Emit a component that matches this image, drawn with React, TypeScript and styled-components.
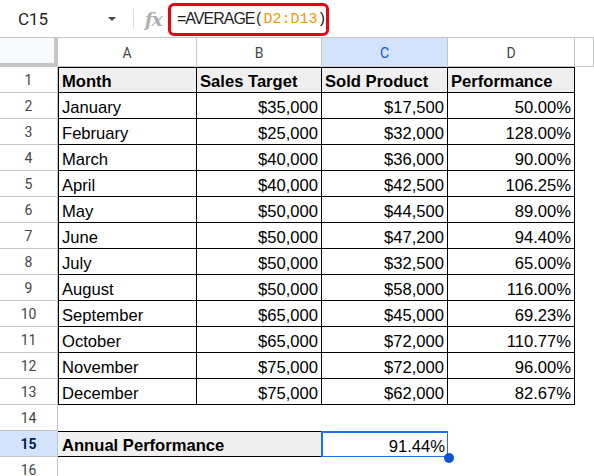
import React from "react";
import styled, { createGlobalStyle, css } from "styled-components";

const Global = createGlobalStyle`
  html, body { margin: 0; padding: 0; background: #fff; overflow: hidden; }
  * { box-sizing: border-box; }
`;

const GRID = "58px 139px 125px 126px 127px 1fr";
const HEAD_LINE = "#c4c7c5";

const Page = styled.div`
  width: 594px;
  height: 476px;
  background: #fff;
  overflow: hidden;
  font-family: "Liberation Sans", Arial, sans-serif;
`;

const Toolbar = styled.div`
  height: 37px;
  display: flex;
  align-items: center;
`;

const NameBox = styled.div`
  width: 133px;
  height: 37px;
  display: flex;
  align-items: center;
  padding-left: 18px;
  padding-right: 17px;
  justify-content: space-between;
  font-family: Roboto, "Liberation Sans", sans-serif;
  font-size: 17px;
  color: #1f1f1f;
`;

const Caret = styled.span`
  width: 0;
  height: 0;
  border-left: 4.5px solid transparent;
  border-right: 4.5px solid transparent;
  border-top: 4.5px solid #444746;
  margin-top: 1px;
`;

const Divider = styled.div`
  width: 1px;
  height: 20px;
  background: #dadce0;
`;

const Fx = styled.span`
  width: 34px;
  text-align: center;
  font-family: "DejaVu Serif", "Liberation Serif", serif;
  font-style: italic;
  font-weight: 700;
  font-size: 19px;
  color: #b0b0b0;
  letter-spacing: -1.5px;
  padding-left: 4px;
`;

const FormulaBox = styled.div`
  width: 161px;
  height: 33px;
  margin-top: 1px;
  border: 3px solid #e30613;
  border-radius: 6px;
  display: flex;
  align-items: center;
  padding-left: 6px;
  color: #1f1f1f;
  white-space: nowrap;
`;

const Fn = styled.span`
  font-family: "Liberation Sans", Arial, sans-serif;
  font-size: 16px;
  letter-spacing: -1px;
`;

const Mono = styled.span<{ $range?: boolean }>`
  font-family: "Liberation Mono", monospace;
  font-size: 15px;
  color: ${(p) => (p.$range ? "#f29900" : "#1f1f1f")};
`;

const HeaderRow = styled.div`
  display: grid;
  grid-template-columns: ${GRID};
  height: 30px;
`;

const Corner = styled.div`
  background: #f8f9fa;
  border-right: 4px solid #c4c7c5;
  border-bottom: 4px solid #c4c7c5;
  border-top: 1px solid ${HEAD_LINE};
`;

const ColHead = styled.div<{ $selected?: boolean }>`
  display: flex;
  align-items: center;
  justify-content: center;
  font-family: Roboto, "Liberation Sans", sans-serif;
  font-size: 14px;
  border-top: 1px solid ${HEAD_LINE};
  border-right: 1px solid ${HEAD_LINE};
  border-bottom: 1px solid ${HEAD_LINE};
  padding-top: 1px;
  color: ${(p) => (p.$selected ? "#0b57d0" : "#444746")};
  background: ${(p) => (p.$selected ? "#d3e3fd" : "#fff")};
`;

const Row = styled.div`
  display: grid;
  grid-template-columns: ${GRID};
  height: 26px;
`;

const RowHead = styled.div<{ $selected?: boolean }>`
  display: flex;
  align-items: center;
  justify-content: center;
  font-family: Roboto, "Liberation Sans", sans-serif;
  font-size: 14px;
  border-right: 1px solid ${HEAD_LINE};
  border-bottom: 1px solid ${HEAD_LINE};
  color: ${(p) => (p.$selected ? "#041e49" : "#444746")};
  font-weight: ${(p) => (p.$selected ? 700 : 400)};
  background: ${(p) => (p.$selected ? "#d3e3fd" : "#fff")};
`;

const Cell = styled.div<{
  $num?: boolean;
  $head?: boolean;
  $table?: boolean;
  $first?: boolean;
  $top?: boolean;
  $span?: number;
  $summary?: boolean;
}>`
  position: relative;
  display: flex;
  align-items: flex-end;
  justify-content: ${(p) => (p.$num ? "flex-end" : "flex-start")};
  padding: 0 3px 1px 3px;
  font-size: 16.6px;
  line-height: 19px;
  color: #000;
  white-space: nowrap;
  font-weight: ${(p) => (p.$head || p.$summary ? 700 : 400)};
  background: ${(p) => (p.$head || p.$summary ? "#efefef" : "#fff")};
  ${(p) => p.$span && css`grid-column: span ${p.$span};`}
  ${(p) =>
    p.$table &&
    css`
      border-right: 1px solid #000;
      border-bottom: 1px solid #000;
    `}
  ${(p) => p.$first && css`border-left: 1px solid #000;`}
  ${(p) => p.$top && css`border-top: 1px solid #000;`}
  ${(p) =>
    p.$summary &&
    css`
      border-top: 1px solid #000;
      border-bottom: 1px solid #000;
      padding-left: 4px;
    `}
`;

const Selected = styled(Cell)`
  overflow: visible;
  &::after {
    content: "";
    position: absolute;
    left: -1px;
    top: 0;
    right: -1px;
    bottom: -1px;
    border: 2px solid #1a73e8;
    pointer-events: none;
  }
`;

const FillHandle = styled.span`
  position: absolute;
  right: -6px;
  bottom: -6px;
  width: 10px;
  height: 10px;
  border-radius: 50%;
  background: #0b57d0;
  z-index: 2;
`;

const data: [string, string, string, string][] = [
  ["January", "$35,000", "$17,500", "50.00%"],
  ["February", "$25,000", "$32,000", "128.00%"],
  ["March", "$40,000", "$36,000", "90.00%"],
  ["April", "$40,000", "$42,500", "106.25%"],
  ["May", "$50,000", "$44,500", "89.00%"],
  ["June", "$50,000", "$47,200", "94.40%"],
  ["July", "$50,000", "$32,500", "65.00%"],
  ["August", "$50,000", "$58,000", "116.00%"],
  ["September", "$65,000", "$45,000", "69.23%"],
  ["October", "$65,000", "$72,000", "110.77%"],
  ["November", "$75,000", "$72,000", "96.00%"],
  ["December", "$75,000", "$62,000", "82.67%"],
];

export default function App() {
  return (
    <Page>
      <Global />
      <Toolbar>
        <NameBox>
          <span>C15</span>
          <Caret />
        </NameBox>
        <Divider />
        <Fx>fx</Fx>
        <FormulaBox>
          <Fn>=AVERAGE</Fn>
          <Mono>(</Mono>
          <Mono $range>D2:D13</Mono>
          <Mono>)</Mono>
        </FormulaBox>
      </Toolbar>
      <HeaderRow>
        <Corner />
        <ColHead>A</ColHead>
        <ColHead>B</ColHead>
        <ColHead $selected>C</ColHead>
        <ColHead>D</ColHead>
        <ColHead />
      </HeaderRow>
      <Row>
        <RowHead>1</RowHead>
        <Cell $head $table $first $top>Month</Cell>
        <Cell $head $table $top>Sales Target</Cell>
        <Cell $head $table $top>Sold Product</Cell>
        <Cell $head $table $top>Performance</Cell>
        <Cell />
      </Row>
      {data.map((r, i) => (
        <Row key={r[0]}>
          <RowHead>{i + 2}</RowHead>
          <Cell $table $first>{r[0]}</Cell>
          <Cell $table $num>{r[1]}</Cell>
          <Cell $table $num>{r[2]}</Cell>
          <Cell $table $num>{r[3]}</Cell>
          <Cell />
        </Row>
      ))}
      <Row>
        <RowHead>14</RowHead>
        <Cell />
        <Cell />
        <Cell />
        <Cell />
        <Cell />
      </Row>
      <Row>
        <RowHead $selected>15</RowHead>
        <Cell $summary $span={2}>Annual Performance</Cell>
        <Selected $num>
          91.44%
          <FillHandle />
        </Selected>
        <Cell />
        <Cell />
      </Row>
      <Row>
        <RowHead>16</RowHead>
        <Cell />
        <Cell />
        <Cell />
        <Cell />
        <Cell />
      </Row>
    </Page>
  );
}
